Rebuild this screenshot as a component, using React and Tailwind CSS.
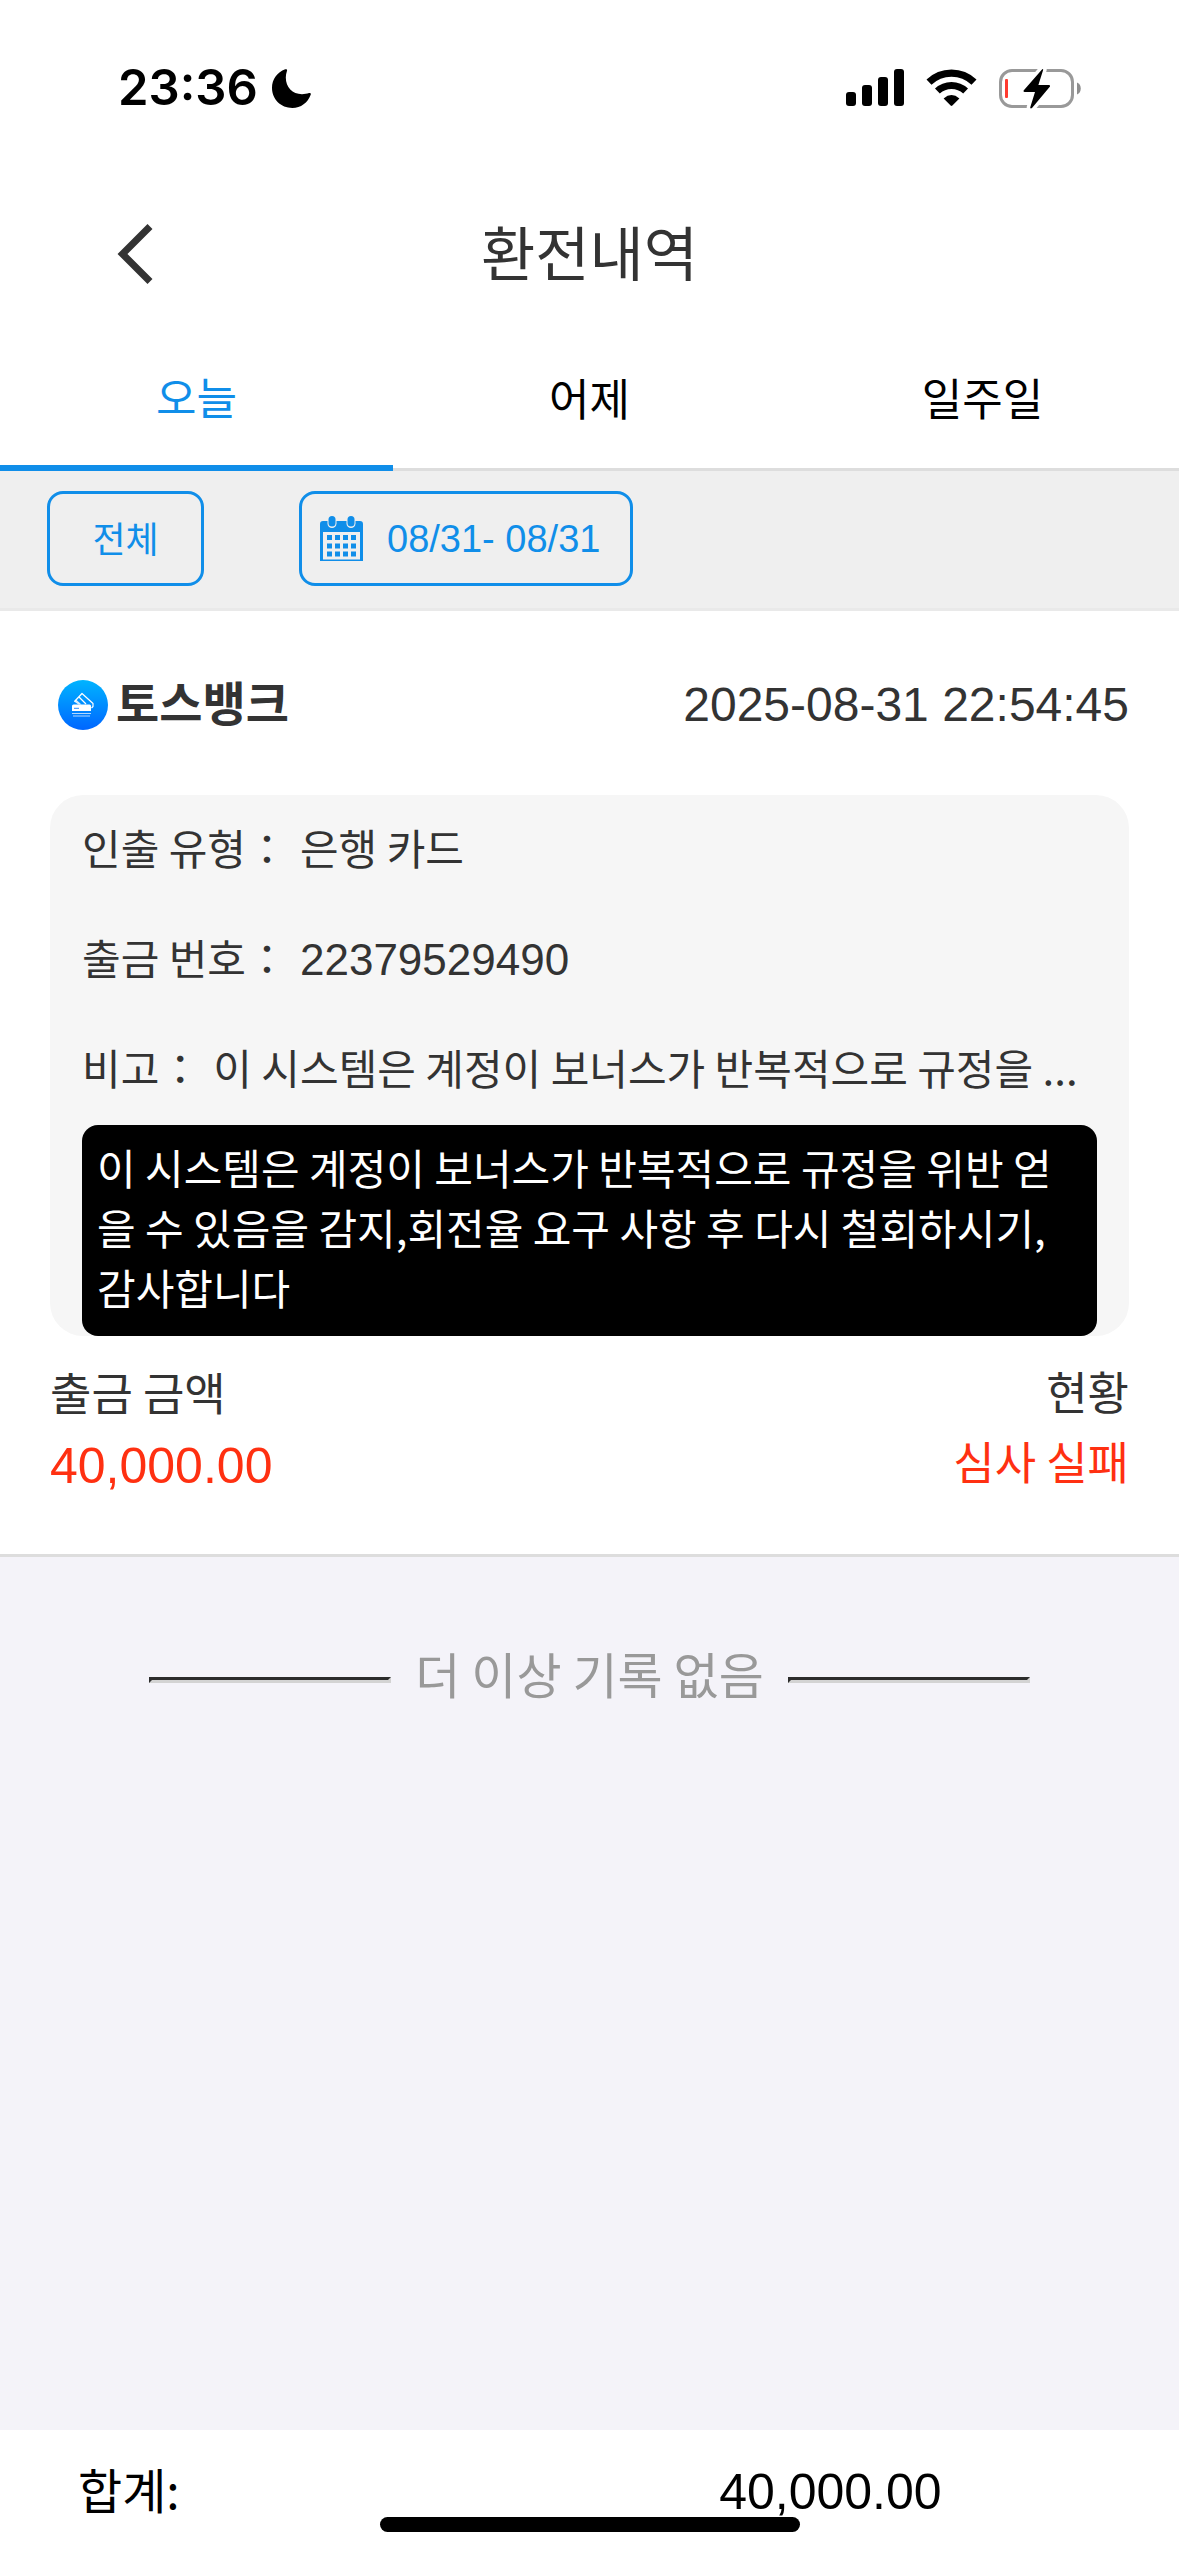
import React, { useState } from 'react';

const MESSAGE = '이 시스템은 계정이 보너스가 반복적으로 규정을 위반 얻을 수 있음을 감지,회전율 요구 사항 후 다시 철회하시기,감사합니다';

// one line preview, the full text is in the bubble below
const preview = (text) => `${text.slice(0, 26)}...`;

const tabs = [
    { id: 'today', label: '오늘' },
    { id: 'yesterday', label: '어제' },
    { id: 'week', label: '일주일' },
];

// --- ICONS ---
const MoonIcon = () => (
    <svg className="w-[39px] h-[39px]" viewBox="0 0 39 39" fill="#000">
        <path d="M13.2 0.3C14.6 -0.2 15.4 0.6 15 1.8C14.2 4 13.8 6.4 13.8 8.6C13.8 18.4 20.4 25.2 30 25.2C32.6 25.2 35 24.8 37 24.1C38.3 23.7 39.2 24.5 38.7 25.8C35.8 33.8 28.8 39 20.4 39C8.8 39 0 30.4 0 18.8C0 10.4 5.2 3.4 13.2 0.3Z" />
    </svg>
);

const SignalIcon = () => (
    <svg className="w-[58px] h-[38px]" viewBox="0 0 58 38" fill="#000">
        <rect x="0" y="23" width="10" height="14" rx="3" />
        <rect x="16" y="16" width="10" height="21" rx="3" />
        <rect x="32" y="8" width="10" height="29" rx="3" />
        <rect x="48" y="0" width="10" height="37" rx="3" />
    </svg>
);

const WifiIcon = () => (
    <svg className="w-[51px] h-[38px]" viewBox="0 0 51 38">
        <path d="M3 13.2A32.5 32.5 0 0 1 48 13.2" fill="none" stroke="#000" strokeWidth="7.2" />
        <path d="M11.4 22A20.5 20.5 0 0 1 39.6 22" fill="none" stroke="#000" strokeWidth="7" />
        <path d="M17.6 29.4Q25.5 22.8 33.4 29.4L26.4 36.6Q25.5 37.4 24.6 36.6Z" fill="#000" />
    </svg>
);

const BatteryIcon = () => (
    <svg className="w-[82px] h-[41px]" viewBox="0 0 82 41">
        <rect x="1.5" y="2.5" width="72" height="36" rx="11.5" fill="none" stroke="#999" strokeWidth="3" />
        <path d="M78 14.5C83 16 83 25 78 26.5Z" fill="#8e8e8e" />
        <rect x="6" y="11" width="3" height="19" rx="1" fill="#ff3b30" />
        <path d="M43 1.5L24.6 22.6Q24 24 25.5 24H36L31.2 39.4Q31.4 41 33 40L51 18.6Q51.6 17 50 17H39.4L44.2 1.8Q44 0.6 43 1.5Z" fill="#000" stroke="#fff" strokeWidth="7" strokeLinejoin="round" />
        <path d="M43 1.5L24.6 22.6Q24 24 25.5 24H36L31.2 39.4Q31.4 41 33 40L51 18.6Q51.6 17 50 17H39.4L44.2 1.8Q44 0.6 43 1.5Z" fill="#000" />
    </svg>
);

const CalendarIcon = () => (
    <svg className="w-[43px] h-[45px] shrink-0" viewBox="0 0 43 45">
        <path d="M3 5H40Q43 5 43 8V45H0V8Q0 5 3 5ZM3 16V43.5H40V16Z" fill="#108ee9" fillRule="evenodd" />
        <rect x="7.5" y="-1.5" width="9" height="13.5" rx="4.5" fill="#efefef" />
        <rect x="26.5" y="-1.5" width="9" height="13.5" rx="4.5" fill="#efefef" />
        <rect x="8.5" y="0" width="7" height="10.5" rx="3.5" fill="#108ee9" />
        <rect x="27.5" y="0" width="7" height="10.5" rx="3.5" fill="#108ee9" />
        {[19, 27.5, 35.5].map(y => [7, 15, 23, 31].map(x => (
            <rect key={`${x}-${y}`} x={x} y={y} width="5" height="5" fill="#108ee9" />
        )))}
    </svg>
);

const BankIcon = () => (
    <svg className="w-[50px] h-[50px]" viewBox="0 0 50 50">
        <defs>
            <linearGradient id="bank" x1="0" y1="0" x2="0" y2="1">
                <stop offset="0" stopColor="#00b4ff" />
                <stop offset="1" stopColor="#0066ff" />
            </linearGradient>
        </defs>
        <circle cx="25" cy="25" r="25" fill="url(#bank)" />
        <path d="M16.5 21.5L24 13.5L35 23.5V26.5L33.5 28" fill="none" stroke="#fff" strokeWidth="1.2" strokeLinejoin="round" />
        <path d="M16 21.5L18 19.5L23.5 24.5H20.5L19 23.5Z" fill="#fff" opacity="0.85" />
        <path d="M21 17L28 24" stroke="#fff" strokeWidth="1.2" />
        <path d="M15.5 24.5H31.5Q33 24.5 33 26V31H14V26Q14 24.5 15.5 24.5Z" fill="#fff" />
        <path d="M16 28.3H21" stroke="#2a8cff" strokeWidth="1" />
        <path d="M14 33.5H33M15 36H32" stroke="#fff" strokeWidth="1.1" opacity="0.7" />
    </svg>
);

// --- STATUS BAR ---
const StatusBar = () => (
    <div className="flex justify-between items-center h-[176px] pl-[118px] pr-[98px]">
        <div className="flex items-center gap-[14px] font-['Inter',sans-serif]">
            <span className="text-[49px] leading-[60px] font-semibold">23:36</span>
            <MoonIcon />
        </div>
        <div className="flex items-center gap-[22px]">
            <SignalIcon />
            <WifiIcon />
            <BatteryIcon />
        </div>
    </div>
);

// --- ONE LINE OF THE DETAIL BOX ---
const DetailRow = ({ label, children }) => (
    <div className="flex items-baseline gap-3 h-[110px] leading-[104px]">
        <span className="shrink-0">{label}：</span>
        {children}
    </div>
);

// --- RECORD CARD ---
const RecordCard = () => (
    <section className="bg-white border-b-[3px] border-[#dddddd] px-[50px] pb-[50px] text-[#333333]">
        <div className="flex justify-between items-center h-[184px] pt-1 pl-2 text-[48px]">
            <div className="flex items-center gap-2">
                <BankIcon />
                <h2 className="pb-2 text-[47px] font-bold">토스뱅크</h2>
            </div>
            <time className="font-['Liberation_Sans',sans-serif]">2025-08-31 22:54:45</time>
        </div>

        <div className="bg-[#f6f6f6] rounded-[33px] px-8 text-[42px]">
            <DetailRow label="인출 유형"><span>은행 카드</span></DetailRow>
            <DetailRow label="출금 번호">
                <span className="font-['Liberation_Sans',sans-serif] text-[44px]">22379529490</span>
            </DetailRow>
            <DetailRow label="비고"><span className="whitespace-nowrap">{preview(MESSAGE)}</span></DetailRow>
            <p className="bg-black text-white rounded-2xl px-[15px] pt-3 pb-[19px] leading-[60px]">{MESSAGE}</p>
        </div>

        <div className="flex justify-between pt-5 text-[45px]">
            <div>
                <p className="leading-[72px]">출금 금액</p>
                <p className="font-['Liberation_Sans',sans-serif] text-[50px] leading-[76px] text-[#ff3011]">40,000.00</p>
            </div>
            <div className="text-right leading-[70px]">
                <p>현황</p>
                <p className="text-[#ff3011]">심사 실패</p>
            </div>
        </div>
    </section>
);

const Line = () => (
    <hr className="w-[242px] border-[3px] border-t-[#2c2c2c] border-l-[#2c2c2c] border-r-[#d3d3d3] border-b-[#d3d3d3]" />
);

// --- MAIN PAGE ---
const App = () => {
    const [activeTab, setActiveTab] = useState('today');

    return (
        <div className="min-h-screen flex flex-col bg-[#f4f3f9] text-black font-['Noto_Sans_CJK_KR',sans-serif]">
            <header className="bg-white">
                <StatusBar />
                <div className="grid grid-cols-[1fr_auto_1fr] items-center h-[156px] pl-[116px] text-[#333333]">
                    <button aria-label="뒤로" className="w-[40px]">
                        <svg className="w-[40px] h-[60px]" viewBox="0 0 40 60" fill="none" stroke="#333" strokeWidth="7">
                            <path d="M34 2.5L6.5 30L34 57.5" />
                        </svg>
                    </button>
                    <h1 className="text-[59px] leading-[72px] pr-[116px] pb-[6px]">환전내역</h1>
                </div>
                <nav className="grid grid-cols-3 text-[44px] leading-[60px]">
                    {tabs.map(tab => (
                        <button
                            key={tab.id}
                            onClick={() => setActiveTab(tab.id)}
                            className={`h-[139px] pb-[6px] ${activeTab === tab.id ? 'border-b-[6px] border-[#108ee9] text-[#108ee9]' : 'border-b-[3px] border-[#dddddd]'}`}
                        >
                            {tab.label}
                        </button>
                    ))}
                </nav>
            </header>

            <div className="flex gap-[95px] bg-[#efefef] border-b-[3px] border-[#e9e9e9] px-[47px] pt-5 pb-[22px] text-[#108ee9]">
                <button className="w-[157px] h-[95px] pb-1 border-[3px] border-[#108ee9] rounded-2xl text-[36px]">전체</button>
                <button className="flex items-center gap-6 w-[334px] h-[95px] pl-[18px] border-[3px] border-[#108ee9] rounded-2xl text-[38px] font-['Liberation_Sans',sans-serif]">
                    <CalendarIcon />
                    <span className="pt-0.5">08/31- 08/31</span>
                </button>
            </div>

            <main className="flex-1">
                <RecordCard />
                <div className="flex justify-center items-center gap-6 pt-20 text-[49px] leading-[72px] text-[#999999]">
                    <Line />
                    <span className="pb-[14px]">더 이상 기록 없음</span>
                    <Line />
                </div>
            </main>

            <footer className="relative flex items-start bg-white h-[126px] pt-[26px] text-[48px]">
                <span className="w-[61%] pl-[78px] leading-[64px]">합계:</span>
                <span className="font-['Liberation_Sans',sans-serif] text-[50px] leading-[72px]">40,000.00</span>
                <div className="absolute bottom-6 left-1/2 -translate-x-1/2 w-[420px] h-[15px] rounded-full bg-black"></div>
            </footer>
        </div>
    );
};

export default App;
